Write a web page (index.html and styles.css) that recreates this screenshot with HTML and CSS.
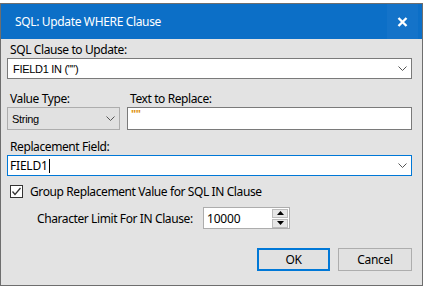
FILE: index.html
```html
<!DOCTYPE html>
<html>
<head>
<meta charset="utf-8">
<link rel="stylesheet" href="styles.css">
</head>
<body>
<div class="window">
  <div class="titlebar">
    <span class="title">SQL: Update WHERE Clause</span>
    <span class="close"><svg width="11" height="10" viewBox="0 0 11 10"><path d="M1.5 1 L9.5 9 M9.5 1 L1.5 9" stroke="#fff" stroke-width="2.4"/></svg></span>
  </div>
  <div class="content">
    <div class="label l1">SQL Clause to Update:</div>
    <div class="combo wide">
      <span class="val small">FIELD1 IN ("")</span>
      <svg class="chev" width="9" height="5" viewBox="0 0 9 5"><polyline points="0.5,0.5 4.5,4.5 8.5,0.5" fill="none" stroke="#555" stroke-width="1"/></svg>
    </div>
    <div class="row2">
      <div class="col1">
        <div class="label">Value Type:</div>
        <div class="dropdown">
          <span class="val small">String</span>
          <svg class="chev" width="9" height="5" viewBox="0 0 9 5"><polyline points="0.5,0.5 4.5,4.5 8.5,0.5" fill="none" stroke="#555" stroke-width="1"/></svg>
        </div>
      </div>
      <div class="col2">
        <div class="label">Text to Replace:</div>
        <div class="textbox"><span class="quote">""</span></div>
      </div>
    </div>
    <div class="label l3">Replacement Field:</div>
    <div class="combo wide focus">
      <span class="val big">FIELD1<span class="caret"></span></span>
      <svg class="chev" width="9" height="5" viewBox="0 0 9 5"><polyline points="0.5,0.5 4.5,4.5 8.5,0.5" fill="none" stroke="#555" stroke-width="1"/></svg>
    </div>
    <div class="checkrow">
      <span class="checkbox"><svg width="11" height="11" viewBox="0 0 11 11"><polyline points="1.5,5.5 4,8.5 9.5,2" fill="none" stroke="#333" stroke-width="1.3"/></svg></span>
      <span class="checklabel">Group Replacement Value for SQL IN Clause</span>
    </div>
    <div class="limitrow">
      <span class="limitlabel">Character Limit For IN Clause:</span>
      <div class="spin">
        <span class="spinval">10000</span>
        <div class="spinbtns">
          <span class="sbtn"><svg width="7" height="4" viewBox="0 0 7 4"><polygon points="0,4 3.5,0 7,4" fill="#000"/></svg></span>
          <span class="sbtn"><svg width="7" height="4" viewBox="0 0 7 4"><polygon points="0,0 3.5,4 7,0" fill="#000"/></svg></span>
        </div>
      </div>
    </div>
    <div class="buttons">
      <button class="btn ok">OK</button>
      <button class="btn cancel">Cancel</button>
    </div>
  </div>
</div>
</body>
</html>
```
FILE: styles.css
```css
html, body {
  margin: 0;
  padding: 0;
  background: #ffffff;
}
body {
  font-family: "Noto Sans", "Open Sans", sans-serif;
  font-size: 12px;
  letter-spacing: -0.4px;
  color: #000;
}
.window {
  margin-top: 3px;
  width: 421px;
  height: 281px;
  border: 1px solid #6e6e6e;
  background: #e3e3e3;
  display: flex;
  flex-direction: column;
}
.titlebar {
  height: 35px;
  background: #0c6fc7;
  display: flex;
  align-items: center;
  justify-content: space-between;
  color: #fff;
}
.title {
  padding-left: 14px;
  font-size: 12px;
  letter-spacing: -0.35px;
  color: #fff;
}
.close {
  width: 31px;
  height: 35px;
  margin-right: 4px;
  background: #1473c9;
  display: flex;
  align-items: center;
  justify-content: center;
}
.content {
  padding: 0 0 0 6px;
  display: flex;
  flex-direction: column;
}
.label {
  height: 16px;
  line-height: 16px;
  padding-left: 3px;
  white-space: nowrap;
}
.l1 { margin-top: 3px; }
.l3 { margin-top: 9px; }
.combo {
  box-sizing: border-box;
  width: 405px;
  height: 21px;
  background: #fff;
  border: 1px solid #7a7a7a;
  display: flex;
  align-items: center;
  justify-content: space-between;
  padding: 0 4px 0 5px;
}
.combo.focus {
  border-color: #0078d7;
  padding-left: 2px;
}
.val.small {
  font-family: "Liberation Sans", Arial, sans-serif;
  font-size: 11px;
  letter-spacing: -0.3px;
}
.val.big {
  font-size: 12px;
  letter-spacing: -0.2px;
  display: flex;
  align-items: center;
}
.caret {
  display: inline-block;
  width: 1px;
  height: 14px;
  background: #000;
  margin-left: 1px;
}
.row2 {
  display: flex;
  margin-top: 12px;
}
.col1 { width: 120px; display: flex; flex-direction: column; }
.col2 { display: flex; flex-direction: column; }
.dropdown {
  box-sizing: border-box;
  width: 113px;
  height: 23px;
  background: #e1e1e1;
  border: 1px solid #adadad;
  display: flex;
  align-items: center;
  justify-content: space-between;
  padding: 0 4px 0 4px;
}
.textbox {
  box-sizing: border-box;
  width: 285px;
  height: 23px;
  background: #fff;
  border: 1px solid #7a7a7a;
  padding: 0 0 0 3px;
}
.quote {
  font-family: "Liberation Sans", Arial, sans-serif;
  font-size: 11px;
  font-weight: bold;
  color: #e0900c;
  line-height: 11px;
  display: block;
  margin-top: 1px;
}
.checkrow {
  display: flex;
  align-items: center;
  margin-top: 9px;
  padding-left: 3px;
  height: 13px;
}
.checkbox {
  box-sizing: border-box;
  width: 13px;
  height: 13px;
  border: 1px solid #333;
  background: #fff;
  display: flex;
  align-items: center;
  justify-content: center;
}
.checklabel {
  margin-left: 7px;
  white-space: nowrap;
}
.limitrow {
  display: flex;
  align-items: center;
  margin-top: 9px;
  padding-left: 30px;
}
.limitlabel {
  width: 166px;
  white-space: nowrap;
}
.spin {
  box-sizing: border-box;
  width: 87px;
  height: 22px;
  background: #fff;
  border: 1px solid #adadad;
  display: flex;
  align-items: center;
  justify-content: space-between;
  padding: 0 1px 0 3px;
}
.spinval {
  letter-spacing: -0.2px;
}
.spinbtns {
  display: flex;
  flex-direction: column;
  gap: 1px;
}
.sbtn {
  box-sizing: border-box;
  width: 16px;
  height: 9px;
  background: #e6e6e6;
  border: 1px solid #bcbcbc;
  display: flex;
  align-items: center;
  justify-content: center;
}
.buttons {
  display: flex;
  justify-content: flex-end;
  gap: 8px;
  margin-top: 19px;
  padding-right: 10px;
}
.btn {
  box-sizing: border-box;
  height: 23px;
  background: #e1e1e1;
  font-family: "Noto Sans", "Open Sans", sans-serif;
  font-size: 12px;
  letter-spacing: -0.3px;
  padding: 0;
  color: #000;
}
.ok {
  width: 73px;
  border: 2px solid #0078d7;
}
.cancel {
  width: 74px;
  border: 1px solid #adadad;
}
```
